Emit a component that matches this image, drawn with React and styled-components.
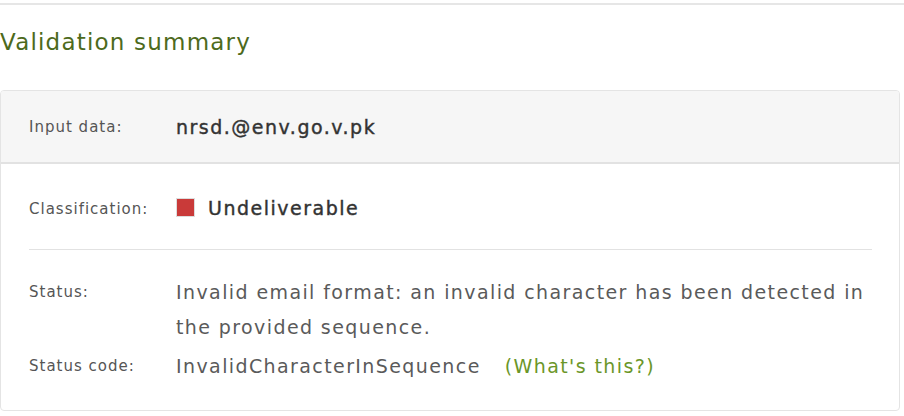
import styled, { createGlobalStyle } from "styled-components";

const GlobalStyle = createGlobalStyle`
  body {
    margin: 0;
    background: #ffffff;
    font-family: "DejaVu Sans", "Liberation Sans", sans-serif;
  }
`;

const Page = styled.div`
  padding-top: 3px;
`;

const Section = styled.section`
  border-top: 2px solid #e6e6e6;
`;

const Title = styled.h2`
  margin: 20px 0 0 0;
  height: 34px;
  line-height: 34px;
  font-size: 23px;
  font-weight: 400;
  letter-spacing: 1.2px;
  color: #4d6a1c;
`;

const Card = styled.div`
  margin-top: 31px;
  width: 898px;
  border: 1px solid #e4e4e4;
  border-radius: 4px;
  overflow: hidden;
`;

const CardHeader = styled.div`
  display: flex;
  align-items: center;
  height: 71px;
  padding: 0 28px;
  background: #f6f6f6;
  border-bottom: 2px solid #e2e2e2;
`;

const CardBody = styled.div`
  padding: 0 27px 0 28px;
`;

const Row = styled.div`
  display: flex;
  align-items: ${(p) => p.$align ?? "center"};
  min-height: ${(p) => p.$height ?? "auto"};
  padding: ${(p) => p.$pad ?? "0"};
`;

const Label = styled.div`
  flex: 0 0 147px;
  font-size: 15px;
  letter-spacing: 1px;
  color: #555555;
  line-height: ${(p) => p.$lh ?? "normal"};
`;

const Value = styled.div`
  flex: 1;
  font-size: ${(p) => p.$size ?? "19px"};
  letter-spacing: ${(p) => p.$spacing ?? "1.4px"};
  color: ${(p) => p.$color ?? "#5a5a5a"};
  line-height: ${(p) => p.$lh ?? "normal"};
  -webkit-text-stroke: ${(p) => (p.$strong ? "0.4px currentColor" : "0")};
`;

const Badge = styled.span`
  display: inline-flex;
  align-items: center;
  gap: 13px;
`;

const Swatch = styled.span`
  display: inline-block;
  width: 17px;
  height: 17px;
  background: #c93a39;
  border: 1px solid #dddddd;
  -webkit-text-stroke: 0;
`;

const Divider = styled.hr`
  margin: 0;
  border: 0;
  border-top: 1px solid #e2e2e2;
`;

const Link = styled.a`
  margin-left: 24px;
  color: #6b9628;
  text-decoration: none;
`;

export default function App() {
  return (
    <Page>
      <GlobalStyle />
      <Section>
        <Title>Validation summary</Title>
        <Card>
          <CardHeader>
            <Label>Input data:</Label>
            <Value $spacing="1.5px" $strong $color="#333333">
              nrsd.@env.go.v.pk
            </Value>
          </CardHeader>
          <CardBody>
            <Row $height="80px" $pad="5px 0 0 0">
              <Label>Classification:</Label>
              <Value $spacing="1.5px" $strong $color="#333333">
                <Badge>
                  <Swatch />
                  Undeliverable
                </Badge>
              </Value>
            </Row>
            <Divider />
            <Row $align="flex-start" $pad="25px 0 0 0">
              <Label $lh="35px">Status:</Label>
              <Value $lh="35px">
                Invalid email format: an invalid character has been detected in the provided sequence.
              </Value>
            </Row>
            <Row $pad="0 0 22px 0">
              <Label $lh="43px">Status code:</Label>
              <Value $lh="43px">
                InvalidCharacterInSequence
                <Link href="#">(What's this?)</Link>
              </Value>
            </Row>
          </CardBody>
        </Card>
      </Section>
    </Page>
  );
}
